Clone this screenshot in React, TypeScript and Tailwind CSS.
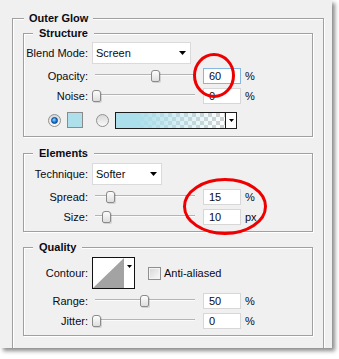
import React from 'react';

function Legend({ children, outer }: { children: React.ReactNode; outer?: boolean }) {
  return (
    <legend
      className={
        outer
          ? 'ml-[1px] px-[5px] text-[11px] leading-[14px] font-bold bg-[#f0f0f0]'
          : 'ml-[9px] px-[6px] text-[11px] leading-[14px] font-bold bg-[#f0f0f0]'
      }
    >
      {children}
    </legend>
  );
}

function Label({ children }: { children: React.ReactNode }) {
  return <span className="w-[64px] shrink-0 text-right whitespace-nowrap">{children}</span>;
}

function Arrow({ w = 7, h = 4 }: { w?: number; h?: number }) {
  return (
    <svg width={w} height={h} viewBox={`0 0 ${w} ${h}`}>
      <path d={`M0 0H${w}L${w / 2} ${h}Z`} fill="#000" />
    </svg>
  );
}

function Select({ value, wide }: { value: string; wide?: boolean }) {
  return (
    <div
      className={
        (wide ? 'w-[99px] pr-[4px]' : 'w-[70px] pr-[4px]') +
        ' ml-[4px] h-[22px] bg-white border border-[#dadada] flex items-center justify-between pl-[3px]'
      }
    >
      <span>{value}</span>
      <Arrow />
    </div>
  );
}

function Slider({ pos }: { pos: number }) {
  return (
    <div className="relative ml-[4px] w-[108px] h-[16px] shrink-0">
      <div className="absolute left-[3px] right-[5px] top-[6px] h-[2px] bg-[#b4b4b4] border-b border-[#fbfbfb]" />
      {/* thumb */}
      <div
        className="absolute top-[2px] w-[9px] h-[12px] rounded-t-[3px] rounded-b-[2px] border border-[#8a8a8a] bg-[linear-gradient(#fdfdfd,#dedede)] shadow-[1px_1px_0_rgba(0,0,0,0.12)]"
        style={{ left: pos }}
      />
    </div>
  );
}

function NumBox({ value, focus }: { value: string; focus?: boolean }) {
  return (
    <div
      className={
        (focus ? 'border-[#86b6e2]' : 'border-[#d7d7d7]') +
        ' ml-[3px] w-[38px] h-[16px] shrink-0 bg-white border pl-[5px] leading-[14px]'
      }
    >
      {value}
    </div>
  );
}

function SliderRow({
  label,
  pos,
  value,
  unit,
  focus,
}: {
  label: string;
  pos: number;
  value: string;
  unit: string;
  focus?: boolean;
}) {
  return (
    <div className="flex items-center h-[16px] mt-[4px]">
      <Label>{label}</Label>
      <Slider pos={pos} />
      <NumBox value={value} focus={focus} />
      <span className="ml-[4px]">{unit}</span>
    </div>
  );
}

function Radio({ checked }: { checked?: boolean }) {
  return (
    <div className="w-[13px] h-[13px] shrink-0 rounded-full border border-[#8f9090] bg-[linear-gradient(#d8d8d8,#fafafa)] flex items-center justify-center">
      {checked && (
        <div className="w-[7px] h-[7px] rounded-full border border-[#0b3f86] bg-[radial-gradient(circle_at_40%_35%,#8fdcff,#1a7ad6_55%,#0b4fa0)]" />
      )}
    </div>
  );
}

const fieldset =
  'border border-[#a0a0a0] shadow-[1px_1px_0_#ffffff,inset_1px_1px_0_#ffffff]';

export default function App() {
  return (
    <div className="relative w-[339px] h-[359px] bg-white font-['Tahoma','Liberation_Sans',Arial,sans-serif] text-[11px] leading-[14px] text-[#0a0a14]">
      <div className="w-[332px] h-[348px] bg-[#f0f0f0] shadow-[3px_3px_4px_rgba(0,0,0,0.45)] overflow-hidden pl-[12px] pt-[11px]">
        <fieldset className={fieldset + ' w-[310px] h-[420px] px-[10px]'}>
          <Legend outer>Outer Glow</Legend>

          {/* Structure */}
          <fieldset className={fieldset + ' w-[290px] mt-[1px] pb-[8px]'}>
            <Legend>Structure</Legend>
            <div className="flex items-center h-[22px] mt-[2px]">
              <Label>Blend Mode:</Label>
              <Select value="Screen" wide />
            </div>
            <SliderRow label="Opacity:" pos={59} value="60" unit="%" focus />
            <SliderRow label="Noise:" pos={0} value="0" unit="%" />
            <div className="flex items-center h-[16px] mt-[8px] pl-[24px]">
              <Radio checked />
              <div className="ml-[6px] w-[16px] h-[16px] border border-[#8a8a8a] bg-[#aee0ec]" />
              <div className="ml-[13px]">
                <Radio />
              </div>
              <div className="ml-[6px] w-[122px] h-[17px] border border-[#1c1c1c] flex">
                <div className="flex-1 bg-[image:linear-gradient(to_right,#aadfeb_18%,rgba(170,223,235,0.45)_60%,rgba(170,223,235,0)_100%),repeating-conic-gradient(#cfd3d4_0%_25%,#ffffff_0%_50%)] bg-[length:100%_100%,8px_8px]" />
                <div className="w-[11px] border-l border-[#1c1c1c] bg-white flex items-center justify-center">
                  <Arrow w={5} h={3} />
                </div>
              </div>
            </div>
          </fieldset>

          {/* Elements */}
          <fieldset className={fieldset + ' w-[290px] mt-[9px] pb-[6px]'}>
            <Legend>Elements</Legend>
            <div className="flex items-center h-[22px] mt-[3px]">
              <Label>Technique:</Label>
              <Select value="Softer" />
            </div>
            <SliderRow label="Spread:" pos={14} value="15" unit="%" />
            <SliderRow label="Size:" pos={10} value="10" unit="px" />
          </fieldset>

          {/* Quality */}
          <fieldset className={fieldset + ' w-[290px] mt-[8px] pb-[6px]'}>
            <Legend>Quality</Legend>
            <div className="flex items-center h-[32px] mt-[3px]">
              <Label>Contour:</Label>
              <div className="ml-[4px] w-[43px] h-[32px] border border-[#111] bg-white flex">
                <svg width="31" height="30" viewBox="0 0 31 30" className="shrink-0">
                  <path d="M0 30L31 0V30Z" fill="#a3a3a3" />
                </svg>
                <div className="flex-1 flex items-start justify-center pt-[7px]">
                  <Arrow w={5} h={3} />
                </div>
              </div>
              <div className="ml-[13px] w-[13px] h-[13px] border border-[#8f8f8f] bg-[linear-gradient(135deg,#d6d6d6,#fbfbfb)] shadow-[inset_0_0_0_1px_#f4f4f4]" />
              <span className="ml-[3px]">Anti-aliased</span>
            </div>
            <SliderRow label="Range:" pos={48} value="50" unit="%" />
            <SliderRow label="Jitter:" pos={0} value="0" unit="%" />
          </fieldset>
        </fieldset>
      </div>

      {/* red annotation circles */}
      <svg className="absolute left-0 top-0 pointer-events-none" width="339" height="359">
        <ellipse cx="214" cy="75.5" rx="19.5" ry="21" fill="none" stroke="#ee0000" strokeWidth="3" />
        <ellipse cx="225" cy="206.5" rx="40.5" ry="27" fill="none" stroke="#ee0000" strokeWidth="3" />
      </svg>
    </div>
  );
}
